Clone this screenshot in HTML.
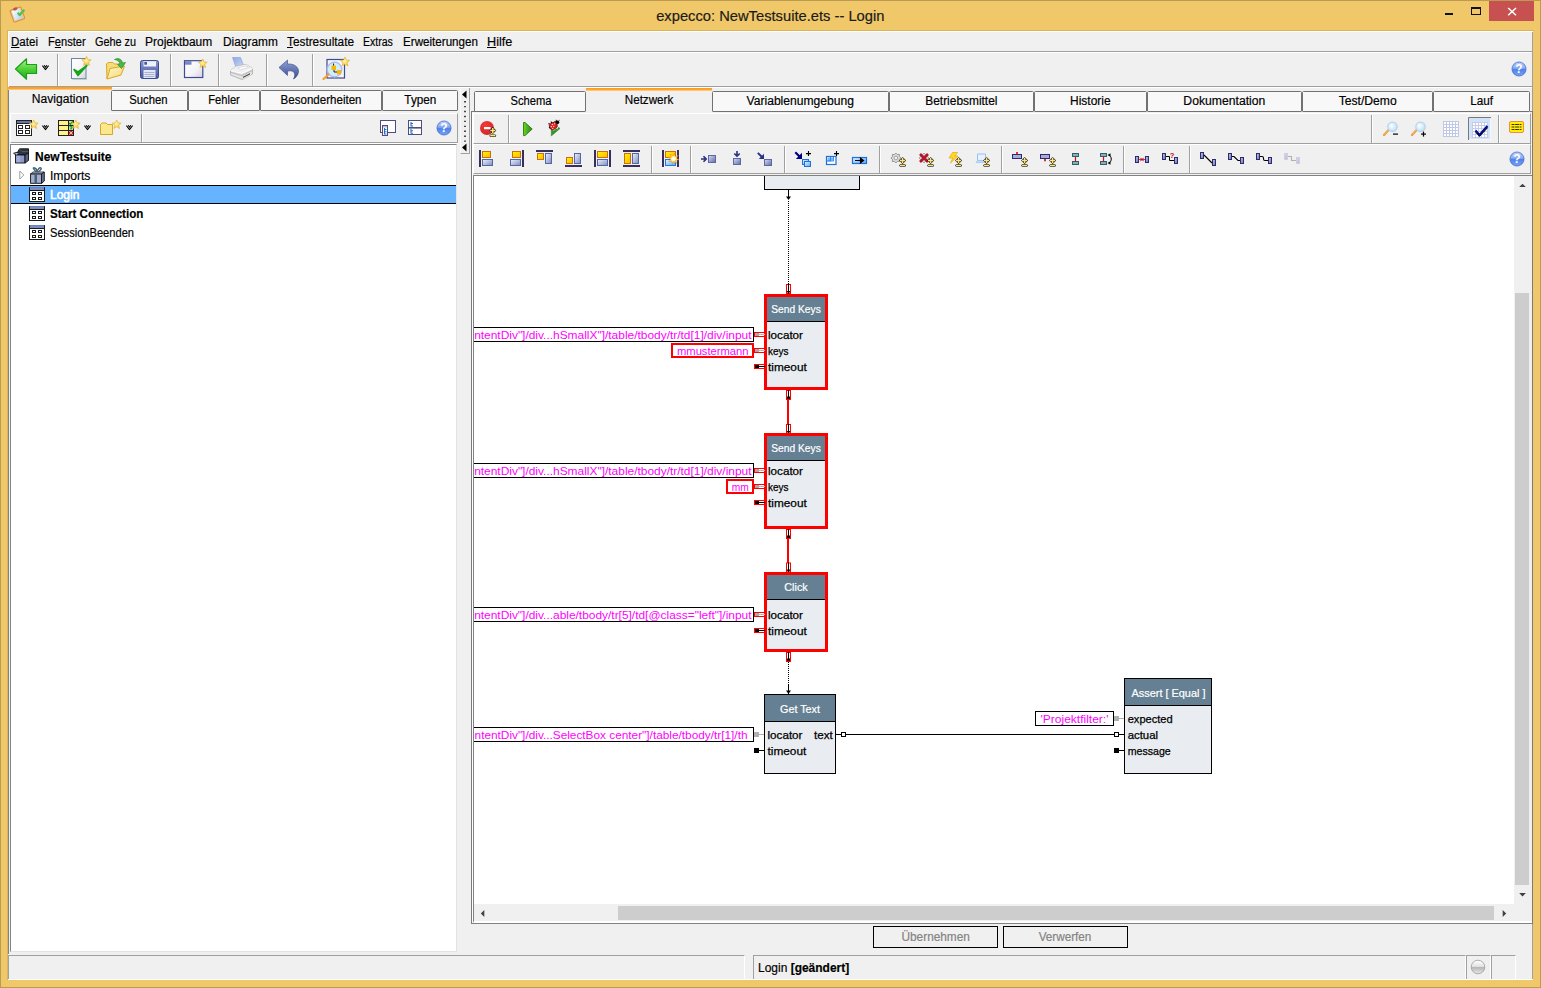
<!DOCTYPE html>
<html><head><meta charset="utf-8"><title>expecco</title>
<style>
*{box-sizing:border-box;margin:0;padding:0}
html,body{width:1541px;height:988px;overflow:hidden;background:#f0c869;font-family:"Liberation Sans",sans-serif;font-size:12px;color:#000;-webkit-text-stroke:.18px currentColor}
.a{position:absolute}
.t{position:absolute;white-space:nowrap;line-height:14px;height:14px}
u{text-decoration:underline}
#win{left:0;top:0;width:1541px;height:988px;background:#f0c869;border:1px solid #b99c52}
#client{left:8px;top:31px;width:1525px;height:949px;background:#f0f0f0}
.tab{position:absolute;height:21px;background:#f8f8f8;border:1px solid #717171;border-radius:1.500px 1.500px 1px 1px;text-align:center;line-height:19px;white-space:nowrap}
.tab.act{background:#f0f0f0;border:0;border-top:2px solid #ffa533;height:25px;line-height:21px}
.vsep{position:absolute;width:2px;border-left:1px solid #a0a0a0;border-right:1px solid #fff}
.hsep{position:absolute;height:2px;border-top:1px solid #a0a0a0;border-bottom:1px solid #fff}
.mag{color:#ff00ff}
.box{position:absolute;background:#fff;border:1px solid #000;color:#f0f;white-space:nowrap;line-height:13px;text-align:right;overflow:hidden}
.node{position:absolute;background:#e9edf1;border:1px solid #000}
.node.red{border:3px solid #f00}
.hd{position:absolute;left:0;right:0;top:0;background:#637b8f;color:#fff;text-align:center;border-bottom:1px solid #000;white-space:nowrap}
</style></head><body>
<div class="a" id="win"></div>
<div class="a" id="client"></div>
<!--TITLE-->
<div class="t" style="left:0;width:1541px;top:7px;text-align:center;font-size:15px;line-height:18px;height:18px;color:#1a1a1a"><span style="display:inline-block;transform:scaleX(0.9814);transform-origin:50% 50%">expecco: NewTestsuite.ets -- Login</span></div>
<!-- window controls -->
<div class="a" style="left:1489px;top:1px;width:45px;height:20px;background:#c75050"></div>
<svg class="a" style="left:1440px;top:0" width="100" height="24" viewBox="0 0 100 24">
<rect x="5" y="13" width="8" height="2" fill="#111"/>
<rect x="31.5" y="8.500" width="9" height="6" fill="none" stroke="#111" stroke-width="1"/><rect x="31" y="7" width="10" height="2" fill="#111"/>
<path d="M68.200 8 L76 15.200 M76 8 L68.200 15.200" stroke="#fff" stroke-width="1.500" fill="none"/>
</svg>
<!-- app icon -->
<svg class="a" style="left:8px;top:4px" width="20" height="19" viewBox="0 0 20 19"><defs><linearGradient id="gClipP" x1="0" y1="0" x2="1" y2="1"><stop offset="0" stop-color="#ffffff"/><stop offset="1" stop-color="#a8d0f0"/></linearGradient></defs>
<g transform="rotate(-20 10 10)"><rect x="3.500" y="4" width="11.500" height="12.500" rx="1" fill="#f0c890" stroke="#d88838" stroke-width="1" opacity=".9"/><rect x="5" y="5.200" width="8.500" height="10" fill="url(#gClipP)"/><ellipse cx="9.200" cy="4.200" rx="2.300" ry="1.500" fill="#c4524a"/></g>
<path d="M9.800 8.700 L11.700 11 L16.300 5.800" stroke="#58c048" stroke-width="2.300" fill="none" stroke-linejoin="round"/>
</svg>
<!-- menu bar -->
<div class="a" style="left:8px;top:31px;width:1525px;height:1px;background:#fff"></div>
<div class="t" style="left:11px;top:35px"><span style="display:inline-block;transform:scaleX(0.9632);transform-origin:0 50%"><u>D</u>atei</span></div>
<div class="t" style="left:47.5px;top:35px"><span style="display:inline-block;transform:scaleX(0.9259);transform-origin:0 50%">F<u>e</u>nster</span></div>
<div class="t" style="left:94.5px;top:35px"><span style="display:inline-block;transform:scaleX(0.9058);transform-origin:0 50%">Gehe zu</span></div>
<div class="t" style="left:145.3px;top:35px"><span style="display:inline-block;transform:scaleX(0.9974);transform-origin:0 50%">Projektbaum</span></div>
<div class="t" style="left:222.5px;top:35px"><span style="display:inline-block;transform:scaleX(0.9902);transform-origin:0 50%">Diagramm</span></div>
<div class="t" style="left:287px;top:35px"><span style="display:inline-block;transform:scaleX(0.9846);transform-origin:0 50%"><u>T</u>estresultate</span></div>
<div class="t" style="left:363.4px;top:35px"><span style="display:inline-block;transform:scaleX(0.8790);transform-origin:0 50%">Extras</span></div>
<div class="t" style="left:402.5px;top:35px"><span style="display:inline-block;transform:scaleX(0.9691);transform-origin:0 50%">Erweiterungen</span></div>
<div class="t" style="left:487.3px;top:35px"><span style="display:inline-block;transform:scaleX(1.0535);transform-origin:0 50%"><u>H</u>ilfe</span></div>
<div class="a" style="left:9px;top:51px;width:1523px;height:1px;background:#a0a0a0"></div>
<div class="a" style="left:9px;top:52px;width:1523px;height:1px;background:#fff"></div>
<div class="a" style="left:8px;top:31px;width:1px;height:58px;background:#fff"></div><div class="a" style="left:8px;top:89px;width:1px;height:865px;background:#828282"></div><div class="a" style="left:7px;top:30px;width:1527px;height:1px;background:#d9b45c"></div><div class="a" style="left:7px;top:30px;width:1px;height:950px;background:#d9b45c"></div>
<div class="a" style="left:1532px;top:32px;width:1px;height:948px;background:#a0a0a0"></div>

<svg width="0" height="0" style="position:absolute"><defs>
<linearGradient id="gGreen" x1="0" y1="0" x2="0" y2="1"><stop offset="0" stop-color="#b4f08c"/><stop offset=".5" stop-color="#4fd23a"/><stop offset="1" stop-color="#1ea81c"/></linearGradient>
<linearGradient id="gPaper" x1="0" y1="0" x2="1" y2="1"><stop offset="0" stop-color="#ffffff"/><stop offset=".6" stop-color="#f4f2f6"/><stop offset="1" stop-color="#d4d0e0"/></linearGradient>
<linearGradient id="gFold" x1="0" y1="0" x2="1" y2="1"><stop offset="0" stop-color="#fffbd4"/><stop offset="1" stop-color="#f7d468"/></linearGradient>
<linearGradient id="gDisk" x1="0" y1="0" x2="0" y2="1"><stop offset="0" stop-color="#8898d0"/><stop offset="1" stop-color="#46579c"/></linearGradient>
<linearGradient id="gUndo" x1="0" y1="0" x2="0" y2="1"><stop offset="0" stop-color="#8fa2d6"/><stop offset="1" stop-color="#3a4c90"/></linearGradient>
<linearGradient id="gHelp" x1="0" y1="0" x2="0" y2="1"><stop offset="0" stop-color="#c4d4fa"/><stop offset=".45" stop-color="#86a8f2"/><stop offset=".52" stop-color="#4e82ea"/><stop offset="1" stop-color="#78a2f4"/></linearGradient>
<radialGradient id="gStar" cx=".45" cy=".45" r=".6"><stop offset="0" stop-color="#fff6a8"/><stop offset="1" stop-color="#f2c030"/></radialGradient>
<symbol id="star" viewBox="0 0 10 10"><path d="M5 .3 L6.4 3.5 L9.8 3.8 L7.2 6.1 L8 9.6 L5 7.7 L2 9.6 L2.8 6.1 L.2 3.8 L3.6 3.5 Z" fill="url(#gStar)" stroke="#e0a820" stroke-width=".5"/></symbol>
<symbol id="chev" viewBox="0 0 7 5.500"><path d="M.4 .7 L3.500 4.600 L6.600 .7 M2.100 .3 L3.500 2.100 L4.900 .3" stroke="#000" stroke-width="1.050" fill="none" stroke-linejoin="miter"/></symbol>
<symbol id="help" viewBox="0 0 16 16"><circle cx="8" cy="8" r="7.800" fill="#d8e6ff" opacity=".7"/><circle cx="8" cy="8" r="7" fill="url(#gHelp)" stroke="#4a6cc8" stroke-width=".8"/><text x="8" y="12.300" font-family="Liberation Sans, sans-serif" font-weight="bold" font-size="12" text-anchor="middle" fill="#fff">?</text></symbol>
</defs></svg>
<!-- back arrow -->
<svg class="a" style="left:14px;top:57px" width="24" height="24" viewBox="0 0 24 24"><path d="M1.5 12 L12.5 1.8 L12.5 7.5 L22.5 7.5 L22.5 16.5 L12.5 16.5 L12.5 22.2 Z" fill="url(#gGreen)" stroke="#18a018" stroke-width="1.2" stroke-linejoin="round"/></svg>
<svg class="a" style="left:42px;top:65px" width="7" height="5.5"><use href="#chev"/></svg>
<div class="vsep" style="left:57px;top:54px;height:32px"></div>
<!-- check doc -->
<svg class="a" style="left:70px;top:56px" width="24" height="25" viewBox="0 0 24 25"><rect x="1.5" y="2.5" width="14.5" height="20" fill="url(#gPaper)" stroke="#6c86a0" stroke-width="1"/><rect x="2.5" y="22.5" width="14.5" height="1" fill="#9aa"/><path d="M4 13.5 L8 19.5 L17 9.5 L8 16 Z" fill="#18b418" stroke="#18a418" stroke-width="1.6" stroke-linejoin="round"/><use href="#star" x="11.5" y="0" width="10" height="10"/></svg>
<!-- open folder -->
<svg class="a" style="left:105px;top:56px" width="24" height="25" viewBox="0 0 24 25"><path d="M2 23 L1.5 8 L3 6.5 L8 6.5 L9.5 8 L15 8 L15 11" fill="#f6dc7c" stroke="#d8a820" stroke-width="1"/><path d="M2 23 L5 12.5 L19.5 10 L16 19 Z" fill="url(#gFold)" stroke="#d8a820" stroke-width="1" stroke-linejoin="round"/><path d="M9.5 3.5 C13 1.5 17 3 17.5 7 L20.5 6.5 L16.5 12.5 L12.5 8.5 L15 8 C14.5 5.5 12.5 4 9.5 3.5 Z" fill="#4cb648" stroke="#2c902c" stroke-width=".7"/></svg>
<!-- save -->
<svg class="a" style="left:139px;top:59px" width="22" height="21" viewBox="0 0 22 21"><rect x="1.500" y="1.500" width="18" height="18" rx="2" fill="url(#gDisk)" stroke="#3c4c8c" stroke-width="1"/><rect x="4.500" y="2.200" width="12.500" height="5.300" fill="#eef0fa"/><rect x="5.300" y="3" width="2.700" height="2.700" fill="#4a5a9c"/><rect x="4.500" y="11" width="12" height="8" fill="#e4e8f6"/><path d="M5.500 13.500 H15.500 M5.500 15.500 H15.500 M5.500 17.500 H15.500" stroke="#a6b0d6" stroke-width="1"/></svg>
<div class="vsep" style="left:170px;top:54px;height:32px"></div>
<!-- new window -->
<svg class="a" style="left:183px;top:57px" width="26" height="23" viewBox="0 0 26 23"><rect x="1.500" y="3.700" width="18.300" height="16.800" fill="url(#gPaper)" stroke="#3c4c94" stroke-width="1.200"/><rect x="2" y="4.200" width="6.500" height="3.500" fill="#7888c0"/><use href="#star" x="15" y="1.500" width="9.500" height="9.500"/></svg>
<div class="vsep" style="left:218px;top:54px;height:32px"></div>
<!-- printer -->
<svg class="a" style="left:229px;top:56px" width="26" height="26" viewBox="0 0 26 26"><defs><linearGradient id="gPrP" x1="0" y1="0" x2="1" y2="1"><stop offset="0" stop-color="#8ea8e4"/><stop offset="1" stop-color="#c8d8f6"/></linearGradient></defs><path d="M3.500 1.500 L11.500 1.500 L14.500 9.500 L7 11.500 Z" fill="url(#gPrP)" stroke="#8ca4dc" stroke-width=".7"/><path d="M1.500 14.500 L7 10.500 L17 8.500 L23.500 12.500 L23.500 18 L13 23.500 L1.500 19 Z" fill="#e4e4e4" stroke="#aaaaaa" stroke-width=".8"/><path d="M1.500 14.500 L7 10.500 L17 8.500 L23.500 12.500 L12.500 17.500 Z" fill="#f1f1f1"/><path d="M8.500 11.800 L16.500 10 L19.500 11.500 L11.500 13.800 Z" fill="#fdfdfd" stroke="#c4c4c4" stroke-width=".5"/><path d="M1.500 14.500 L12.500 17.500 L23.500 12.500" fill="none" stroke="#ffffff" stroke-width=".9"/><path d="M1.800 16.200 L12.500 19.500 L23.300 14.600" fill="none" stroke="#b8b8b8" stroke-width="1.100"/><path d="M13 21.200 L21.500 17.200 L22.500 18.700 L14 23 Z" fill="#fafafa" stroke="#bbb" stroke-width=".4"/><path d="M14 20.700 L21 17.300 L21 18.600 L14 22 Z" fill="#4a4a4a"/></svg>
<div class="vsep" style="left:266px;top:54px;height:32px"></div>
<!-- undo -->
<svg class="a" style="left:278px;top:59px" width="22" height="21" viewBox="0 0 22 21"><path d="M1 8.500 L9.500 1 L9.500 5 C16 4.500 21 8 20.500 13 C20 16.500 17.500 19 15.500 20 C17 17.500 17.500 14 15 12.500 C13.500 11.600 11.500 11.800 9.500 12.200 L9.500 16.500 Z" fill="url(#gUndo)" stroke="#34468a" stroke-width=".6"/></svg>
<div class="vsep" style="left:312px;top:54px;height:32px"></div>
<!-- zoom diagram -->
<svg class="a" style="left:322px;top:57px" width="28" height="24" viewBox="0 0 28 24"><rect x="5" y="2.500" width="17.500" height="18.500" fill="#f4f4fa" stroke="#3c4c94" stroke-width="1.200"/><circle cx="12.500" cy="12.500" r="7.300" fill="#c8ecf8" fill-opacity=".85" stroke="#b0b8e8" stroke-width="1.300"/><rect x="9.500" y="8.500" width="4.500" height="4.500" fill="#f8b800"/><rect x="15" y="13" width="4" height="4.500" fill="#f8b800"/><path d="M11.500 6.500 V8.500 M12 13 V15 H15" stroke="#222" stroke-width="1" fill="none"/><path d="M1.500 22 L6.500 17.500" stroke="#f0a030" stroke-width="2.200" stroke-linecap="round"/><use href="#star" x="18" y="-.5" width="10" height="10"/></svg>
<!-- help right -->
<svg class="a" style="left:1511px;top:61px" width="16" height="16"><use href="#help" width="16" height="16"/></svg>
<div class="a" style="left:9px;top:86px;width:1523px;height:1px;background:#a0a0a0"></div>
<div class="a" style="left:9px;top:87px;width:1523px;height:1px;background:#fff"></div>

<svg width="0" height="0" style="position:absolute"><defs>
<symbol id="tbl" viewBox="0 0 16 16"><rect x=".5" y=".5" width="15" height="15" fill="#fff" stroke="#222" stroke-width="1"/><rect x="1" y="1" width="14" height="2" fill="#6674a8"/><rect x="1" y="3" width="14" height="1" fill="#222"/><rect x="2.500" y="5.500" width="4" height="3" fill="#fff" stroke="#222"/><rect x="9.500" y="5.500" width="4" height="3" fill="#fff" stroke="#222"/><rect x="2.500" y="10.500" width="4" height="3" fill="#fff" stroke="#222"/><rect x="9.500" y="10.500" width="4" height="3" fill="#fff" stroke="#222"/></symbol><symbol id="tbl15" viewBox="0 0 16 15"><rect x=".5" y=".5" width="15" height="14" fill="#fff" stroke="#1a1a1a" stroke-width="1"/><rect x="1" y="0" width="14" height="3" fill="#7b8cc4"/><rect x="0" y="0" width="16" height=".5" fill="#5a6898" opacity=".6"/><rect x="0" y="3" width="16" height="1" fill="#1a1a1a"/><rect x="3.500" y="5.500" width="3" height="2" fill="#fff" stroke="#1a1a1a" stroke-width="1"/><rect x="9.500" y="5.500" width="3" height="2" fill="#fff" stroke="#1a1a1a" stroke-width="1"/><rect x="3.500" y="10.500" width="3" height="2" fill="#fff" stroke="#1a1a1a" stroke-width="1"/><rect x="9.500" y="10.500" width="3" height="2" fill="#fff" stroke="#1a1a1a" stroke-width="1"/></symbol>
</defs></svg>
<!-- left tabs -->
<div class="a" style="left:8px;top:87px;width:104px;height:3px;background:linear-gradient(#ff9818,#ffa228 34%,#ffa830 66%,#ffc870 67%)"></div>
<div class="t" style="left:8px;top:92px;width:104px;text-align:center"><span style="display:inline-block;transform:scaleX(1.0052);transform-origin:50% 50%">Navigation</span></div>
<div class="tab" style="left:111px;top:90px;width:77px;padding-right:2px"><span style="display:inline-block;transform:scaleX(0.9410);transform-origin:50% 50%">Suchen</span></div>
<div class="tab" style="left:188px;top:90px;width:72px"><span style="display:inline-block;transform:scaleX(0.9290);transform-origin:50% 50%">Fehler</span></div>
<div class="tab" style="left:260px;top:90px;width:122px"><span style="display:inline-block;transform:scaleX(0.9634);transform-origin:50% 50%">Besonderheiten</span></div>
<div class="tab" style="left:382px;top:90px;width:76px"><span style="display:inline-block;transform:scaleX(0.9785);transform-origin:50% 50%">Typen</span></div>
<!-- sub toolbar -->
<div class="a" style="left:10px;top:113px;width:448px;height:30px;border-top:1px solid #fff;border-left:1px solid #fff;border-right:1px solid #a0a0a0;border-bottom:1px solid #a0a0a0"></div>
<svg class="a" style="left:16px;top:118px" width="24" height="18" viewBox="0 0 24 18"><use href="#tbl" x="0" y="2" width="16" height="16"/><use href="#star" x="13" y="1.500" width="9.500" height="9.500"/></svg>
<svg class="a" style="left:42px;top:125px" width="7" height="5.5"><use href="#chev"/></svg>
<svg class="a" style="left:58px;top:118px" width="24" height="18" viewBox="0 0 24 18"><rect x=".5" y="2.500" width="15" height="15" fill="#fff48c" stroke="#222"/><path d="M.5 7.500 H15.500 M.5 12.500 H15.500 M10.500 2.500 V17.500" stroke="#222" stroke-width="1" fill="none"/><rect x="11" y="3" width="4" height="4" fill="#b8e8a0"/><rect x="11" y="8" width="4" height="4" fill="#b8e8a0"/><rect x="11" y="13" width="4" height="4" fill="#ffd0c0"/><path d="M11.300 5 L12.500 6.300 L14.700 3.300" stroke="#0a9020" stroke-width="1.200" fill="none"/><path d="M11.800 9 Q13 8 14 9 Q14.300 10 13 10.500 V11.500" stroke="#0a9020" stroke-width="1.100" fill="none"/><circle cx="13" cy="15" r="1.500" fill="#fff" stroke="#e00" stroke-width="1.100"/><use href="#star" x="13" y="1.500" width="9.500" height="9.500"/></svg>
<svg class="a" style="left:84px;top:125px" width="7" height="5.5"><use href="#chev"/></svg>
<svg class="a" style="left:100px;top:118px" width="24" height="18" viewBox="0 0 24 18"><path d="M.5 16.500 V6.500 L2 5 H6 L7.500 6.500 H12.500 V16.500 Z" fill="#fce88c" stroke="#d8a820" stroke-width="1"/><use href="#star" x="12" y="1.500" width="9.500" height="9.500"/></svg>
<svg class="a" style="left:126px;top:125px" width="7" height="5.5"><use href="#chev"/></svg>
<div class="vsep" style="left:141px;top:114px;height:28px"></div>
<svg class="a" style="left:380px;top:120px" width="17" height="17" viewBox="0 0 17 17"><rect x=".5" y=".5" width="15" height="12" fill="#fff" stroke="#504c80" stroke-width="1"/><rect x="2.500" y="5.500" width="5" height="10" fill="#fff" stroke="#504c80" stroke-width="1"/><rect x="3" y="6" width="4" height="1.500" fill="#b8bcd8"/><path d="M4.500 8 V14.500 M4.500 9.500 H6.500 M4.500 11.800 H6.500 M4.500 14 H6.500" stroke="#2070c8" stroke-width="1.100" fill="none"/></svg>
<svg class="a" style="left:408px;top:120px" width="15" height="16" viewBox="0 0 15 16"><rect x=".5" y=".5" width="13" height="14" fill="#fff" stroke="#504c80" stroke-width="1"/><path d="M.5 7.800 H13.500" stroke="#504c80" stroke-width="1.600"/><path d="M3 2 V6.500 M3 3.500 H5 M3 6 H5 M3 9 V13.500 M3 10.800 H5 M3 13.200 H5" stroke="#2070c8" stroke-width="1.100" fill="none"/></svg>
<svg class="a" style="left:436px;top:120px" width="16" height="16"><use href="#help" width="16" height="16"/></svg>
<!-- tree panel -->
<div class="a" style="left:10px;top:144px;width:447px;height:808px;background:#fff;border-top:1px solid #828282;border-left:1px solid #828282;border-right:1px solid #e3e3e3;border-bottom:1px solid #e3e3e3"></div>
<div class="a" style="left:10px;top:143px;width:448px;height:1px;background:#fff"></div>
<div class="a" style="left:11px;top:185px;width:445px;height:19px;background:#66b3ff;border-top:1px solid #000;border-bottom:1px solid #000"></div>
<!-- tree icons -->
<svg class="a" style="left:13px;top:148px" width="17" height="16" viewBox="0 0 17 16"><path d="M6.500 .8 H15.500 V5 L12 7 H3 Z" fill="#2c393e" stroke="#111" stroke-width=".9"/><path d="M6.500 1 L9 3.500 H15" fill="none" stroke="#55666c" stroke-width=".8"/><rect x="2.500" y="7" width="9.500" height="8" fill="#8e9acb" stroke="#111" stroke-width=".9"/><rect x="3.300" y="7.800" width="4" height="6.400" fill="#aab4de" opacity=".7"/><path d="M12 7 L15.500 5 V12.500 L12 15 Z" fill="#56628f" stroke="#111" stroke-width=".9"/><path d="M3 7 L.6 5.300 L4 4.300 L6 5.300" fill="#a4afdc" stroke="#111" stroke-width=".9" stroke-linejoin="round"/></svg>
<svg class="a" style="left:19px;top:170px" width="6" height="10" viewBox="0 0 6 10"><path d="M.8 1 L4.800 5 L.8 9 Z" fill="#fff" stroke="#a0a0a0" stroke-width="1"/></svg>
<svg class="a" style="left:30px;top:167px" width="15" height="17" viewBox="0 0 15 17"><path d="M.5 7 L3 5 H14 L11.500 7 Z" fill="#d0d4e4" stroke="#111" stroke-width=".8"/><rect x=".6" y="7" width="11" height="9.300" fill="#a4acd0" stroke="#111" stroke-width=".9"/><path d="M11.600 7 L14.300 5 V14 L11.600 16.300 Z" fill="#6c7498" stroke="#111" stroke-width=".9"/><rect x="4.500" y="7" width="2.500" height="9.300" fill="#3e6478"/><path d="M6 5 C3 1 2.500 .5 4.500 .8 C6 1.200 7 3.500 7 5 C7.500 2.500 9.500 0 11 1 C12 2 9.500 4 8 5" fill="none" stroke="#3e6478" stroke-width="1.300"/></svg>
<svg class="a" style="left:29px;top:187px" width="16" height="15"><use href="#tbl15" width="16" height="15"/></svg>
<svg class="a" style="left:29px;top:206px" width="16" height="15"><use href="#tbl15" width="16" height="15"/></svg>
<svg class="a" style="left:29px;top:225px" width="16" height="15"><use href="#tbl15" width="16" height="15"/></svg>
<!-- tree text -->
<div class="t" style="left:34.5px;top:150px;font-weight:bold"><span style="display:inline-block;transform:scaleX(0.9991);transform-origin:0 50%">NewTestsuite</span></div>
<div class="t" style="left:50px;top:169px"><span style="display:inline-block;transform:scaleX(1.0096);transform-origin:0 50%">Imports</span></div>
<div class="t" style="left:50px;top:188px;color:#fff;-webkit-text-stroke:.55px #fff"><span style="display:inline-block;transform:scaleX(1.0009);transform-origin:0 50%">Login</span></div>
<div class="t" style="left:50px;top:207px;font-weight:bold"><span style="display:inline-block;transform:scaleX(0.9651);transform-origin:0 50%">Start Connection</span></div>
<div class="t" style="left:50px;top:226px"><span style="display:inline-block;transform:scaleX(0.9256);transform-origin:0 50%">SessionBeenden</span></div>
<!-- splitter -->
<div class="a" style="left:460px;top:88px;width:10px;height:66px;border-right:1px solid #a0a0a0;border-bottom:1px solid #a0a0a0;border-left:1px solid #fafafa"></div>
<svg class="a" style="left:460px;top:88px" width="10" height="66" viewBox="0 0 10 66"><path d="M6.500 2.500 V10.500 L2 6.500 Z M6.500 55.500 V63.500 L2 59.500 Z" fill="#000"/><path d="M5 13 V55" stroke="#000" stroke-width="1.400" stroke-dasharray="1.400 3.530"/></svg>

<!-- right tabs -->
<div class="tab" style="left:474px;top:91px;width:112px;padding-left:2px"><span style="display:inline-block;transform:scaleX(0.9312);transform-origin:50% 50%">Schema</span></div>
<div class="a" style="left:586px;top:88px;width:126px;height:3px;background:linear-gradient(#ff9818,#ffa228 34%,#ffa830 66%,#ffc870 67%)"></div>
<div class="t" style="left:586px;top:93px;width:126px;text-align:center"><span style="display:inline-block;transform:scaleX(0.9697);transform-origin:50% 50%">Netzwerk</span></div>
<div class="tab" style="left:712px;top:91px;width:177px"><span style="display:inline-block;transform:scaleX(1.0091);transform-origin:50% 50%">Variablenumgebung</span></div>
<div class="tab" style="left:889px;top:91px;width:145px"><span style="display:inline-block;transform:scaleX(0.9931);transform-origin:50% 50%">Betriebsmittel</span></div>
<div class="tab" style="left:1034px;top:91px;width:113px"><span style="display:inline-block;transform:scaleX(0.9954);transform-origin:50% 50%">Historie</span></div>
<div class="tab" style="left:1147px;top:91px;width:155px"><span style="display:inline-block;transform:scaleX(1.0159);transform-origin:50% 50%">Dokumentation</span></div>
<div class="tab" style="left:1302px;top:91px;width:131px"><span style="display:inline-block;transform:scaleX(1.0112);transform-origin:50% 50%">Test/Demo</span></div>
<div class="tab" style="left:1433px;top:91px;width:97px"><span style="display:inline-block;transform:scaleX(0.9761);transform-origin:50% 50%">Lauf</span></div>
<!-- panel frame -->
<div class="a" style="left:471px;top:111px;width:1px;height:813px;background:#7a7a7a"></div><div class="a" style="left:471px;top:111px;width:4px;height:1px;background:#7a7a7a"></div><div class="a" style="left:472px;top:112px;width:1px;height:810px;background:#fff"></div>
<div class="a" style="left:473px;top:113px;width:1058px;height:31px;border-top:1px solid #fff;border-left:1px solid #fff;border-right:1px solid #a0a0a0;border-bottom:1px solid #a0a0a0"></div>
<div class="a" style="left:473px;top:144px;width:1058px;height:30px;border-top:1px solid #fff;border-left:1px solid #fff;border-right:1px solid #a0a0a0;border-bottom:1px solid #a0a0a0"></div>
<!--TBSTART-->
<svg class="a" style="left:474px;top:113px" width="1058" height="62" viewBox="474 113 1058 62"><defs>
<linearGradient id="gY" x1="0" y1="0" x2="1" y2="1"><stop offset="0" stop-color="#fff800"/><stop offset="1" stop-color="#ffb400"/></linearGradient>
<linearGradient id="gB" x1="0" y1="0" x2="1" y2="1"><stop offset="0" stop-color="#f0f2fa"/><stop offset="1" stop-color="#7c8cc0"/></linearGradient>
<linearGradient id="gB2" x1="0" y1="0" x2="1" y2="1"><stop offset="0" stop-color="#d8dcf0"/><stop offset="1" stop-color="#5c6ca8"/></linearGradient>
<linearGradient id="gLB" x1="0" y1="0" x2="1" y2="1"><stop offset="0" stop-color="#e8f4ff"/><stop offset="1" stop-color="#58a8f0"/></linearGradient>
<linearGradient id="gPl" x1="0" y1="0" x2="1" y2="0"><stop offset="0" stop-color="#66dc1c"/><stop offset=".45" stop-color="#48b020"/><stop offset="1" stop-color="#2e8a18"/></linearGradient>
<linearGradient id="gPin" x1="0" y1="0" x2="1" y2="1"><stop offset="0" stop-color="#c4c8ec"/><stop offset="1" stop-color="#6870ac"/></linearGradient>
<radialGradient id="gSp" cx=".5" cy=".5" r=".5"><stop offset="0" stop-color="#fff"/><stop offset=".45" stop-color="#fff6a0"/><stop offset=".8" stop-color="#ffc020"/><stop offset="1" stop-color="#f08000"/></radialGradient>
<radialGradient id="gRed" cx=".4" cy=".3" r=".8"><stop offset="0" stop-color="#f83838"/><stop offset="1" stop-color="#c82828"/></radialGradient>
<radialGradient id="gLens" cx=".4" cy=".4" r=".6"><stop offset="0" stop-color="#ffffff"/><stop offset="1" stop-color="#bce0f8"/></radialGradient>
<symbol id="stamp" viewBox="0 0 7 10.200" overflow="visible"><path d="M3.500 .1 L7 3.600 L3.500 7.100 L0 3.600 Z" fill="#18181c"/><path d="M.9 3.600 H6.100 M3.500 1 V6.200" stroke="#ffe672" stroke-width="1.500"/><path d="M0 8.700 L1 7.500 H6 L7 8.700 L6 9.900 H1 Z" fill="#18181c"/><path d="M.9 8.700 H6.100" stroke="#ffe672" stroke-width="1.350"/></symbol>
</defs>
<circle cx="487" cy="128" r="7" fill="url(#gRed)"/><rect x="484" y="127" width="6.500" height="2.200" fill="#fff"/>
<use href="#stamp" x="489.3" y="127" width="7" height="10.200"/>
<rect x="508" y="115" width="1" height="28" fill="#a0a0a0"/><rect x="509" y="115" width="1" height="28" fill="#fff"/>
<path d="M523.500 122.500 H525 L532.200 129 L525 135.600 H523.500 Z" fill="url(#gPl)" stroke="#2a7c12" stroke-width=".9" stroke-linejoin="round"/>
<path d="M551.300 129.500 L554 131 L556.200 128.800 L557.300 129.800 L558.500 127.300 L560 128.500 L551.300 135.900 Z" fill="#35962a" stroke="#247a1c" stroke-width=".5"/>
<path d="M548.300 123.700 L550.300 124 M549 128 L550.500 127 M550.800 121.600 L552 122.800 M555 120.800 L555.200 122" stroke="#000" stroke-width="1.100"/>
<circle cx="557.300" cy="122.300" r="1.900" fill="#000"/><path d="M558.500 121 L559.500 120.300 M556.500 120.800 L556.200 119.800" stroke="#000" stroke-width=".9"/>
<ellipse cx="553.300" cy="125.900" rx="4.200" ry="3.500" fill="#e41a1a" stroke="#300" stroke-width=".5" transform="rotate(-32 553.300 125.900)"/>
<circle cx="552.300" cy="124.500" r=".65" fill="#fff"/><circle cx="554.600" cy="123.800" r=".65" fill="#fff"/><circle cx="551.300" cy="126.700" r=".65" fill="#fff"/><circle cx="553.700" cy="126.300" r=".65" fill="#fff"/><circle cx="552.800" cy="128.300" r=".65" fill="#fff"/>
<rect x="1371" y="115" width="1" height="28" fill="#a0a0a0"/><rect x="1372" y="115" width="1" height="28" fill="#fff"/>
<path d="M1384 135.0 L1389 129.5" stroke="#e89838" stroke-width="2.200" stroke-linecap="round"/><path d="M1384.3 134.5 L1388.5 129.7" stroke="#f8c888" stroke-width=".8"/>
<circle cx="1392.5" cy="126.8" r="4.700" fill="url(#gLens)" stroke="#b8d4ec" stroke-width="1.300"/>
<rect x="1393" y="133.5" width="5" height="1.200" fill="#000"/>
<path d="M1412 135.0 L1417 129.5" stroke="#e89838" stroke-width="2.200" stroke-linecap="round"/><path d="M1412.3 134.5 L1416.5 129.7" stroke="#f8c888" stroke-width=".8"/>
<circle cx="1420.5" cy="126.8" r="4.700" fill="url(#gLens)" stroke="#b8d4ec" stroke-width="1.300"/>
<rect x="1421" y="133.5" width="5" height="1.200" fill="#000"/>
<rect x="1422.9" y="131.6" width="1.200" height="5" fill="#000"/>
<rect x="1443" y="121" width="16" height="16" fill="#c0c8e8"/>
<rect x="1444" y="122" width="2" height="2" fill="#fff"/>
<rect x="1444" y="125" width="2" height="2" fill="#fff"/>
<rect x="1444" y="128" width="2" height="2" fill="#fff"/>
<rect x="1444" y="131" width="2" height="2" fill="#fff"/>
<rect x="1444" y="134" width="2" height="2" fill="#fff"/>
<rect x="1447" y="122" width="2" height="2" fill="#fff"/>
<rect x="1447" y="125" width="2" height="2" fill="#fff"/>
<rect x="1447" y="128" width="2" height="2" fill="#fff"/>
<rect x="1447" y="131" width="2" height="2" fill="#fff"/>
<rect x="1447" y="134" width="2" height="2" fill="#fff"/>
<rect x="1450" y="122" width="2" height="2" fill="#fff"/>
<rect x="1450" y="125" width="2" height="2" fill="#fff"/>
<rect x="1450" y="128" width="2" height="2" fill="#fff"/>
<rect x="1450" y="131" width="2" height="2" fill="#fff"/>
<rect x="1450" y="134" width="2" height="2" fill="#fff"/>
<rect x="1453" y="122" width="2" height="2" fill="#fff"/>
<rect x="1453" y="125" width="2" height="2" fill="#fff"/>
<rect x="1453" y="128" width="2" height="2" fill="#fff"/>
<rect x="1453" y="131" width="2" height="2" fill="#fff"/>
<rect x="1453" y="134" width="2" height="2" fill="#fff"/>
<rect x="1456" y="122" width="2" height="2" fill="#fff"/>
<rect x="1456" y="125" width="2" height="2" fill="#fff"/>
<rect x="1456" y="128" width="2" height="2" fill="#fff"/>
<rect x="1456" y="131" width="2" height="2" fill="#fff"/>
<rect x="1456" y="134" width="2" height="2" fill="#fff"/>
<rect x="1468.500" y="117.500" width="22" height="22" fill="#d2e2f8" stroke="none"/><path d="M1468.500 140 V117.500 H1491" stroke="#787878" stroke-width="1" fill="none"/><path d="M1469.500 139.500 H1490.500 V118.500" stroke="#fff" stroke-width="1" fill="none" opacity=".6"/>
<rect x="1472" y="122" width="16" height="16" fill="#c4cce8"/>
<rect x="1473" y="123" width="2" height="2" fill="#fff"/>
<rect x="1473" y="126" width="2" height="2" fill="#fff"/>
<rect x="1473" y="129" width="2" height="2" fill="#fff"/>
<rect x="1473" y="132" width="2" height="2" fill="#fff"/>
<rect x="1473" y="135" width="2" height="2" fill="#fff"/>
<rect x="1476" y="123" width="2" height="2" fill="#fff"/>
<rect x="1476" y="126" width="2" height="2" fill="#fff"/>
<rect x="1476" y="129" width="2" height="2" fill="#fff"/>
<rect x="1476" y="132" width="2" height="2" fill="#fff"/>
<rect x="1476" y="135" width="2" height="2" fill="#fff"/>
<rect x="1479" y="123" width="2" height="2" fill="#fff"/>
<rect x="1479" y="126" width="2" height="2" fill="#fff"/>
<rect x="1479" y="129" width="2" height="2" fill="#fff"/>
<rect x="1479" y="132" width="2" height="2" fill="#fff"/>
<rect x="1479" y="135" width="2" height="2" fill="#fff"/>
<rect x="1482" y="123" width="2" height="2" fill="#fff"/>
<rect x="1482" y="126" width="2" height="2" fill="#fff"/>
<rect x="1482" y="129" width="2" height="2" fill="#fff"/>
<rect x="1482" y="132" width="2" height="2" fill="#fff"/>
<rect x="1482" y="135" width="2" height="2" fill="#fff"/>
<rect x="1485" y="123" width="2" height="2" fill="#fff"/>
<rect x="1485" y="126" width="2" height="2" fill="#fff"/>
<rect x="1485" y="129" width="2" height="2" fill="#fff"/>
<rect x="1485" y="132" width="2" height="2" fill="#fff"/>
<rect x="1485" y="135" width="2" height="2" fill="#fff"/>
<path d="M1475.500 130.500 L1479.500 135 L1487.500 126" stroke="#000c90" stroke-width="2.200" fill="none"/><path d="M1476 132.500 L1479.500 136.300 L1487.500 127.800" stroke="#000" stroke-width="1" fill="none"/>
<rect x="1498" y="115" width="1" height="28" fill="#a0a0a0"/><rect x="1499" y="115" width="1" height="28" fill="#fff"/>
<rect x="1509.500" y="121.500" width="14" height="11" rx="1.500" fill="#fff000" stroke="#e89040" stroke-width="1"/><path d="M1511.500 124.500 H1521.500 M1511.500 127 H1521.500 M1511.500 129.500 H1521.500" stroke="#403000" stroke-width="1" stroke-dasharray="3 .6 4 .6 2 .6"/>
<rect x="479" y="150" width="2" height="17" fill="#3a2d5c"/>
<rect x="482.5" y="151.5" width="8" height="6" fill="url(#gY)" stroke="#c87010" stroke-width="1"/>
<rect x="482.5" y="159.5" width="10" height="6" fill="url(#gB)" stroke="#5068a8" stroke-width="1"/>
<rect x="512.5" y="151.5" width="8" height="6" fill="url(#gY)" stroke="#c87010" stroke-width="1"/>
<rect x="510.5" y="159.5" width="10" height="6" fill="url(#gB)" stroke="#5068a8" stroke-width="1"/>
<rect x="522" y="150" width="2" height="17" fill="#3a2d5c"/>
<rect x="536" y="150" width="17" height="2" fill="#3a2d5c"/>
<rect x="537.5" y="153.5" width="6" height="6" fill="url(#gY)" stroke="#c87010" stroke-width="1"/>
<rect x="545.5" y="153.5" width="6" height="10" fill="url(#gB)" stroke="#5068a8" stroke-width="1"/>
<rect x="565" y="165" width="17" height="2" fill="#3a2d5c"/>
<rect x="566.5" y="157.5" width="6" height="6" fill="url(#gY)" stroke="#c87010" stroke-width="1"/>
<rect x="574.5" y="153.5" width="6" height="10" fill="url(#gB)" stroke="#5068a8" stroke-width="1"/>
<rect x="594" y="150" width="2" height="17" fill="#3a2d5c"/>
<rect x="609" y="150" width="2" height="17" fill="#3a2d5c"/>
<rect x="597.5" y="151.5" width="10" height="6" fill="url(#gY)" stroke="#c87010" stroke-width="1"/>
<rect x="597.5" y="159.5" width="10" height="6" fill="url(#gB)" stroke="#5068a8" stroke-width="1"/>
<rect x="623" y="150" width="17" height="2" fill="#3a2d5c"/>
<rect x="623" y="165" width="17" height="2" fill="#3a2d5c"/>
<rect x="624.5" y="153.5" width="6" height="10" fill="url(#gY)" stroke="#c87010" stroke-width="1"/>
<rect x="632.5" y="153.5" width="6" height="10" fill="url(#gB)" stroke="#5068a8" stroke-width="1"/>
<rect x="651" y="146" width="1" height="27" fill="#a0a0a0"/><rect x="652" y="146" width="1" height="27" fill="#fff"/>
<rect x="662" y="150" width="2" height="17" fill="#3a2d5c"/>
<rect x="677" y="150" width="2" height="17" fill="#3a2d5c"/>
<rect x="665.5" y="151.5" width="10" height="6" fill="url(#gY)" stroke="#c87010" stroke-width="1"/>
<rect x="665.5" y="159.5" width="10" height="6" fill="url(#gLB)" stroke="#1c78e8" stroke-width="1"/>
<polygon points="674.61,153.21 674.95,156.54 678.17,155.61 676.05,158.20 678.99,159.81 675.66,160.15 676.59,163.37 674.00,161.25 672.39,164.19 672.05,160.86 668.83,161.79 670.95,159.20 668.01,157.59 671.34,157.25 670.41,154.03 673.00,156.15" fill="url(#gSp)" stroke="#f09010" stroke-width=".5"/>
<rect x="690" y="146" width="1" height="27" fill="#a0a0a0"/><rect x="691" y="146" width="1" height="27" fill="#fff"/>
<path d="M701 159 H705 M703.500 156.300 L706.200 159 L703.500 161.700" stroke="#283080" stroke-width="1.600" fill="none"/>
<rect x="708.5" y="155.5" width="7" height="7" fill="url(#gB2)" stroke="#5c68a8" stroke-width="1"/>
<path d="M737 151 V155 M734.300 153.500 L737 156.200 L739.700 153.500" stroke="#283080" stroke-width="1.600" fill="none"/>
<rect x="733.5" y="158.5" width="7" height="6" fill="url(#gB2)" stroke="#5c68a8" stroke-width="1"/>
<path d="M757.800 152.800 L762 157" stroke="#283080" stroke-width="1.900" fill="none"/><path d="M764 153.800 V159 H758.800 Z" fill="#283080"/>
<rect x="764.5" y="159.5" width="7" height="6" fill="url(#gB2)" stroke="#5c68a8" stroke-width="1"/>
<rect x="784" y="146" width="1" height="27" fill="#a0a0a0"/><rect x="785" y="146" width="1" height="27" fill="#fff"/>
<path d="M795.300 152.300 L800 157" stroke="#000080" stroke-width="2.200" fill="none"/><path d="M802 152.800 V159 H795.800 Z" fill="#000080"/>
<path d="M806 153.600 H811 M808.500 151.100 V156.100" stroke="#000" stroke-width="1.100"/>
<rect x="802.5" y="159.5" width="6" height="5" fill="url(#gLB)" stroke="#1c70e0" stroke-width="1"/>
<rect x="804.5" y="161.5" width="6" height="5" fill="url(#gLB)" stroke="#1c70e0" stroke-width="1"/>
<rect x="826.500" y="156.500" width="9.500" height="8" fill="#fff" stroke="#1c70e0" stroke-width="1.200"/><path d="M827.500 157.500 H833 V160.500 H830.500 V161.500 H827.500 Z" fill="#78b8f8"/><path d="M830.500 157 V161 M827 161 H833.500 V157" stroke="#1c70e0" stroke-width=".8" fill="none"/>
<path d="M834 153.600 H839 M836.500 151.100 V156.100" stroke="#000" stroke-width="1.100"/>
<rect x="852.500" y="157.500" width="14" height="6" fill="url(#gLB)" stroke="#1c70e0" stroke-width="1.200"/><path d="M855 160.500 H863 M860.500 158.300 L863.500 160.500 L860.500 162.700 Z" stroke="#000" stroke-width="1.200" fill="#000"/>
<rect x="879" y="146" width="1" height="27" fill="#a0a0a0"/><rect x="880" y="146" width="1" height="27" fill="#fff"/>
<polygon points="900.90,158.00 899.32,159.42 899.44,161.54 897.32,161.42 895.90,163.00 894.48,161.42 892.36,161.54 892.48,159.42 890.90,158.00 892.48,156.58 892.36,154.46 894.48,154.58 895.90,153.00 897.32,154.58 899.44,154.46 899.32,156.58" fill="#dcdcdc" stroke="#909090" stroke-width=".9"/><circle cx="895.9" cy="158" r="1.800" fill="#f4f4f4" stroke="#909090" stroke-width=".8"/>
<use href="#stamp" x="899.1" y="156.8" width="7" height="10.200"/>
<polygon points="929.00,158.00 927.42,159.42 927.54,161.54 925.42,161.42 924.00,163.00 922.58,161.42 920.46,161.54 920.58,159.42 919.00,158.00 920.58,156.58 920.46,154.46 922.58,154.58 924.00,153.00 925.42,154.58 927.54,154.46 927.42,156.58" fill="#dcdcdc" stroke="#a0a0a0" stroke-width=".9"/><circle cx="924" cy="158" r="1.800" fill="#f4f4f4" stroke="#a0a0a0" stroke-width=".8"/>
<path d="M920 154 L928 162 M928 154 L920 162" stroke="#b41828" stroke-width="2.600"/>
<use href="#stamp" x="927.1" y="156.8" width="7" height="10.200"/>
<path d="M952.500 152.500 L957.500 152.500 L954.800 156 L958 156 L950.500 163 L952.800 158 L949 158 Z" fill="#ffd820" stroke="#e8a810" stroke-width=".7"/>
<use href="#stamp" x="955.1" y="156.8" width="7" height="10.200"/>
<path d="M977.500 154 H985.500 V160.500 H977.500 Z" fill="#e8f2ff" stroke="#98c0f0" stroke-width="1"/><path d="M976 162.500 H987 L985.500 160.500 H977.500 Z" fill="#c4dcf8" stroke="#98c0f0" stroke-width=".7"/>
<use href="#stamp" x="983.1" y="156.8" width="7" height="10.200"/>
<rect x="1001" y="146" width="1" height="27" fill="#a0a0a0"/><rect x="1002" y="146" width="1" height="27" fill="#fff"/>
<rect x="1012.500" y="154.500" width="9" height="4" fill="#a8acd8" stroke="#2c2c6c" stroke-width="1"/><rect x="1016.200" y="152" width="1.600" height="2.300" fill="#e00010"/>
<use href="#stamp" x="1021.1" y="156.8" width="7" height="10.200"/>
<rect x="1040.500" y="154.500" width="9" height="4" fill="#a8acd8" stroke="#2c2c6c" stroke-width="1"/><rect x="1044.200" y="159" width="1.600" height="2.300" fill="#e00010"/>
<use href="#stamp" x="1049.1" y="156.8" width="7" height="10.200"/>
<rect x="1072.5" y="153.500" width="6" height="3" fill="#80b0b8" stroke="#306068" stroke-width="1"/><rect x="1072.5" y="161.500" width="6" height="3" fill="#80b0b8" stroke="#306068" stroke-width="1"/><rect x="1074.9" y="157" width="1.200" height="4.500" fill="#f00010"/>
<rect x="1100.5" y="153.500" width="6" height="3" fill="#80b0b8" stroke="#306068" stroke-width="1"/><rect x="1100.5" y="161.500" width="6" height="3" fill="#80b0b8" stroke="#306068" stroke-width="1"/><rect x="1102.9" y="157" width="1.200" height="4.500" fill="#f00010"/>
<path d="M1109 155 C1112 156.500 1112 161.500 1109 163" stroke="#000" stroke-width="1" fill="none"/><path d="M1107.500 155 L1110.500 153.300 L1110.500 156.800 Z M1107.500 163 L1110.500 161.200 L1110.500 164.800 Z" fill="#000"/>
<rect x="1123" y="146" width="1" height="27" fill="#a0a0a0"/><rect x="1124" y="146" width="1" height="27" fill="#fff"/>
<rect x="1135.5" y="156.5" width="3" height="6" fill="url(#gPin)" stroke="#2c2c6c" stroke-width="1" opacity="1"/>
<rect x="1145.5" y="156.5" width="3" height="6" fill="url(#gPin)" stroke="#2c2c6c" stroke-width="1" opacity="1"/>
<path d="M1139 159.500 H1145" stroke="#c00018" stroke-width=".8"/><path d="M1140.300 157.800 L1143.700 161.200 M1143.700 157.800 L1140.300 161.200" stroke="#c00018" stroke-width="1"/>
<rect x="1162.5" y="153.5" width="3" height="6" fill="url(#gPin)" stroke="#2c2c6c" stroke-width="1" opacity="1"/>
<rect x="1174.5" y="157.5" width="3" height="6" fill="url(#gPin)" stroke="#2c2c6c" stroke-width="1" opacity="1"/>
<path d="M1166 156.500 H1169.500 V160.500 H1174" stroke="#000" stroke-width="1" fill="none"/><text x="1169.800" y="158" font-size="7.500" font-weight="bold" fill="#c00018" font-family="Liberation Sans, sans-serif">?</text>
<rect x="1189" y="146" width="1" height="27" fill="#a0a0a0"/><rect x="1190" y="146" width="1" height="27" fill="#fff"/>
<rect x="1200.5" y="152.5" width="3" height="6" fill="url(#gPin)" stroke="#2c2c6c" stroke-width="1" opacity="1"/>
<rect x="1212.5" y="159.5" width="3" height="6" fill="url(#gPin)" stroke="#2c2c6c" stroke-width="1" opacity="1"/>
<path d="M1204 155 L1212 163" stroke="#000" stroke-width="1.100"/>
<rect x="1228.5" y="153.5" width="3" height="6" fill="url(#gPin)" stroke="#2c2c6c" stroke-width="1" opacity="1"/>
<rect x="1240.5" y="157.5" width="3" height="6" fill="url(#gPin)" stroke="#2c2c6c" stroke-width="1" opacity="1"/>
<path d="M1232 156.500 H1234 L1238 160.500 H1240" stroke="#000" stroke-width="1.100" fill="none"/>
<rect x="1256.5" y="153.5" width="3" height="6" fill="url(#gPin)" stroke="#2c2c6c" stroke-width="1" opacity="1"/>
<rect x="1268.5" y="157.5" width="3" height="6" fill="url(#gPin)" stroke="#2c2c6c" stroke-width="1" opacity="1"/>
<path d="M1260 156.500 H1262 Q1263.500 156.500 1263.500 158 V159 Q1263.500 160.500 1265 160.500 H1268" stroke="#000" stroke-width="1.100" fill="none"/>
<rect x="1284.5" y="153.5" width="3" height="6" fill="url(#gPin)" stroke="#a8a8cc" stroke-width="1" opacity="0.45"/>
<rect x="1296.5" y="157.5" width="3" height="6" fill="url(#gPin)" stroke="#a8a8cc" stroke-width="1" opacity="0.45"/>
<path d="M1288 156.500 H1291.500 V160.500 H1296" stroke="#b0b0b8" stroke-width="1.100" fill="none"/>
</svg>
<svg class="a" style="left:1509px;top:151px" width="16" height="16"><use href="#help" width="16" height="16"/></svg>
<!--TBEND-->
<!--TB2-->

<div class="a" style="left:473px;top:175px;width:1058px;height:745px;background:#f0f0f0;border-top:1px solid #828282;border-left:1px solid #828282;border-bottom:2px solid #fff;box-sizing:content-box"></div>
<div class="a" style="left:1532px;top:111px;width:1px;height:813px;background:#7a7a7a"></div><div class="a" style="left:1530px;top:111px;width:3px;height:1px;background:#7a7a7a"></div><div class="a" style="left:471px;top:923px;width:1062px;height:1px;background:#828282"></div>
<div class="a" style="left:474px;top:176px;width:1040px;height:728px;background:#fff"></div>
<div class="a" style="left:1515px;top:293px;width:14px;height:592px;background:#cdcdcd"></div>
<div class="a" style="left:618px;top:906px;width:876px;height:14px;background:#cdcdcd"></div>
<svg class="a" style="left:474px;top:176px" width="1057" height="746" viewBox="474 176 1057 746">
<path d="M1519.200 187 L1522.500 183.700 L1525.800 187 Z" fill="#404040"/><path d="M1519.200 893 L1522.500 896.500 L1525.800 893 Z" fill="#404040"/>
<path d="M1502.700 910 L1506.200 913.500 L1502.700 917 Z" fill="#404040"/><path d="M484.300 910 L480.800 913.500 L484.300 917 Z" fill="#404040"/>
<defs><clipPath id="cv"><rect x="474" y="176" width="1040" height="728"/></clipPath></defs><g clip-path="url(#cv)" font-family="Liberation Sans, sans-serif" font-size="11">
<rect x="764.500" y="170.500" width="95" height="19" fill="#e9edf1" stroke="#000"/>
<path d="M788.500 190 V199" stroke="#000" stroke-width="1"/><path d="M786 196.500 H791 L788.500 200 Z" fill="#000"/>
<path d="M788.500 201 V284" stroke="#000" stroke-width="1" stroke-dasharray="1 1"/>
<rect x="786.500" y="284.5" width="4" height="9" fill="#fff" stroke="#f00" stroke-width="1"/>
<path d="M788.500 284 V292" stroke="#000" stroke-width="1"/><path d="M786.500 291 H790.500 L788.500 294 Z" fill="#000"/>
<rect x="765.5" y="295.5" width="61" height="93" fill="#e9edf1" stroke="#f00" stroke-width="3"/>
<rect x="767" y="297" width="58" height="24" fill="#658093"/>
<rect x="767" y="321" width="58" height="1" fill="#000"/>
<text x="796.0" y="313.0" fill="#fff" stroke="#fff" stroke-width=".2" text-anchor="middle" textLength="49.5" lengthAdjust="spacingAndGlyphs">Send Keys</text>
<rect x="754.5" y="332.5" width="10" height="4" fill="#fff" stroke="#f00" stroke-width="1"/>
<rect x="755" y="333.0" width="4" height="3" fill="#a8a8a8"/><rect x="759" y="334.0" width="6" height="1" fill="#b8b8b8"/>
<rect x="754.5" y="348.5" width="10" height="4" fill="#fff" stroke="#f00" stroke-width="1"/>
<rect x="755" y="349.0" width="4" height="3" fill="#a8a8a8"/><rect x="759" y="350.0" width="6" height="1" fill="#b8b8b8"/>
<rect x="754.5" y="364.5" width="10" height="4" fill="#fff" stroke="#f00" stroke-width="1"/>
<rect x="755" y="365.0" width="4" height="3" fill="#000"/><rect x="759" y="366.0" width="6" height="1" fill="#000"/>
<text x="768" y="339.0" fill="#000" stroke="#000" stroke-width=".25" text-anchor="start" textLength="35" lengthAdjust="spacingAndGlyphs">locator</text>
<text x="768" y="355.0" fill="#000" stroke="#000" stroke-width=".25" text-anchor="start" textLength="20.5" lengthAdjust="spacingAndGlyphs">keys</text>
<text x="768" y="371.0" fill="#000" stroke="#000" stroke-width=".25" text-anchor="start" textLength="38.8" lengthAdjust="spacingAndGlyphs">timeout</text>
<rect x="460.5" y="327.5" width="293" height="14" fill="#fff" stroke="#000" stroke-width="1"/>
<text x="751.5" y="339" fill="#f0f" text-anchor="end" textLength="284" lengthAdjust="spacingAndGlyphs">ontentDiv"]/div...hSmallX"]/table/tbody/tr/td[1]/div/input</text>
<rect x="672" y="344" width="81" height="13" fill="#fff" stroke="#f00" stroke-width="2"/>
<text x="748.5" y="355" fill="#f0f" text-anchor="end" textLength="71.5" lengthAdjust="spacingAndGlyphs">mmustermann</text>
<rect x="786.500" y="390.5" width="4" height="9" fill="#fff" stroke="#f00" stroke-width="1"/>
<path d="M788.500 390 V397" stroke="#000" stroke-width="1"/><rect x="787" y="396.5" width="3" height="2.500" fill="#000"/>
<rect x="787" y="400" width="2" height="24" fill="#f00"/>
<rect x="786.500" y="424.5" width="4" height="9" fill="#fff" stroke="#f00" stroke-width="1"/>
<path d="M788.500 424 V432" stroke="#000" stroke-width="1"/><path d="M786.500 431 H790.500 L788.500 434 Z" fill="#000"/>
<rect x="765.5" y="434.5" width="61" height="93" fill="#e9edf1" stroke="#f00" stroke-width="3"/>
<rect x="767" y="436" width="58" height="24" fill="#658093"/>
<rect x="767" y="460" width="58" height="1" fill="#000"/>
<text x="796.0" y="452.0" fill="#fff" stroke="#fff" stroke-width=".2" text-anchor="middle" textLength="49.5" lengthAdjust="spacingAndGlyphs">Send Keys</text>
<rect x="754.5" y="468.5" width="10" height="4" fill="#fff" stroke="#f00" stroke-width="1"/>
<rect x="755" y="469.0" width="4" height="3" fill="#a8a8a8"/><rect x="759" y="470.0" width="6" height="1" fill="#b8b8b8"/>
<rect x="754.5" y="484.5" width="10" height="4" fill="#fff" stroke="#f00" stroke-width="1"/>
<rect x="755" y="485.0" width="4" height="3" fill="#a8a8a8"/><rect x="759" y="486.0" width="6" height="1" fill="#b8b8b8"/>
<rect x="754.5" y="500.5" width="10" height="4" fill="#fff" stroke="#f00" stroke-width="1"/>
<rect x="755" y="501.0" width="4" height="3" fill="#000"/><rect x="759" y="502.0" width="6" height="1" fill="#000"/>
<text x="768" y="475.0" fill="#000" stroke="#000" stroke-width=".25" text-anchor="start" textLength="35" lengthAdjust="spacingAndGlyphs">locator</text>
<text x="768" y="491.0" fill="#000" stroke="#000" stroke-width=".25" text-anchor="start" textLength="20.5" lengthAdjust="spacingAndGlyphs">keys</text>
<text x="768" y="507.0" fill="#000" stroke="#000" stroke-width=".25" text-anchor="start" textLength="38.8" lengthAdjust="spacingAndGlyphs">timeout</text>
<rect x="460.5" y="463.5" width="293" height="14" fill="#fff" stroke="#000" stroke-width="1"/>
<text x="751.5" y="475" fill="#f0f" text-anchor="end" textLength="284" lengthAdjust="spacingAndGlyphs">ontentDiv"]/div...hSmallX"]/table/tbody/tr/td[1]/div/input</text>
<rect x="727" y="480" width="26" height="13" fill="#fff" stroke="#f00" stroke-width="2"/>
<text x="748.7" y="491" fill="#f0f" text-anchor="end" textLength="17" lengthAdjust="spacingAndGlyphs">mm</text>
<rect x="786.500" y="529.5" width="4" height="9" fill="#fff" stroke="#f00" stroke-width="1"/>
<path d="M788.500 529 V536" stroke="#000" stroke-width="1"/><rect x="787" y="535.5" width="3" height="2.500" fill="#000"/>
<rect x="787" y="539" width="2" height="24" fill="#f00"/>
<rect x="786.500" y="563.0" width="4" height="9" fill="#fff" stroke="#f00" stroke-width="1"/>
<path d="M788.500 562.5 V570.5" stroke="#000" stroke-width="1"/><path d="M786.500 569.5 H790.500 L788.500 572.5 Z" fill="#000"/>
<rect x="765.5" y="573.5" width="61" height="77" fill="#e9edf1" stroke="#f00" stroke-width="3"/>
<rect x="767" y="575" width="58" height="24" fill="#658093"/>
<rect x="767" y="599" width="58" height="1" fill="#000"/>
<text x="796.0" y="591.0" fill="#fff" stroke="#fff" stroke-width=".2" text-anchor="middle" textLength="23.5" lengthAdjust="spacingAndGlyphs">Click</text>
<rect x="754.5" y="612.5" width="10" height="4" fill="#fff" stroke="#f00" stroke-width="1"/>
<rect x="755" y="613.0" width="4" height="3" fill="#a8a8a8"/><rect x="759" y="614.0" width="6" height="1" fill="#b8b8b8"/>
<rect x="754.5" y="628.5" width="10" height="4" fill="#fff" stroke="#f00" stroke-width="1"/>
<rect x="755" y="629.0" width="4" height="3" fill="#000"/><rect x="759" y="630.0" width="6" height="1" fill="#000"/>
<text x="768" y="619.0" fill="#000" stroke="#000" stroke-width=".25" text-anchor="start" textLength="35" lengthAdjust="spacingAndGlyphs">locator</text>
<text x="768" y="635.0" fill="#000" stroke="#000" stroke-width=".25" text-anchor="start" textLength="38.8" lengthAdjust="spacingAndGlyphs">timeout</text>
<rect x="460.5" y="607.5" width="293" height="14" fill="#fff" stroke="#000" stroke-width="1"/>
<text x="751.5" y="619" fill="#f0f" text-anchor="end" textLength="284" lengthAdjust="spacingAndGlyphs">ontentDiv"]/div...able/tbody/tr[5]/td[@class="left"]/input</text>
<rect x="786.500" y="652.5" width="4" height="9" fill="#fff" stroke="#f00" stroke-width="1"/>
<path d="M788.500 652 V659" stroke="#000" stroke-width="1"/><rect x="787" y="658.5" width="3" height="2.500" fill="#000"/>
<path d="M788.500 662 V684" stroke="#000" stroke-width="1" stroke-dasharray="1 1"/><path d="M788.500 684 V694" stroke="#000"/><path d="M786 690.500 H791 L788.500 694 Z" fill="#000"/>
<rect x="764.5" y="694.5" width="71" height="79" fill="#e9edf1" stroke="#000" stroke-width="1"/>
<rect x="765" y="695" width="70" height="26" fill="#658093"/>
<rect x="765" y="721" width="70" height="1" fill="#000"/>
<text x="800.0" y="712.5" fill="#fff" stroke="#fff" stroke-width=".2" text-anchor="middle" textLength="40" lengthAdjust="spacingAndGlyphs">Get Text</text>
<rect x="754" y="732.0" width="5" height="5" fill="#b0b0b0"/><rect x="759" y="734.0" width="5" height="1" fill="#b0b0b0"/>
<rect x="754" y="748.0" width="5" height="5" fill="#000"/><rect x="759" y="750.0" width="5" height="1" fill="#000"/>
<text x="767.5" y="739.0" fill="#000" stroke="#000" stroke-width=".25" text-anchor="start" textLength="35" lengthAdjust="spacingAndGlyphs">locator</text>
<text x="767.5" y="755.0" fill="#000" stroke="#000" stroke-width=".25" text-anchor="start" textLength="38.8" lengthAdjust="spacingAndGlyphs">timeout</text>
<text x="814" y="739.0" fill="#000" stroke="#000" stroke-width=".25" text-anchor="start" textLength="18.8" lengthAdjust="spacingAndGlyphs">text</text>
<rect x="460.5" y="727.5" width="293" height="14" fill="#fff" stroke="#000" stroke-width="1"/>
<text x="747.5" y="739" fill="#f0f" text-anchor="end" textLength="279.5" lengthAdjust="spacingAndGlyphs">ontentDiv"]/div...SelectBox center"]/table/tbody/tr[1]/th</text>
<rect x="836" y="734" width="5" height="1" fill="#000"/><rect x="841.500" y="732.500" width="4" height="4" fill="#fff" stroke="#000"/><rect x="846" y="734" width="268" height="1" fill="#000"/>
<rect x="1124.5" y="678.5" width="87" height="95" fill="#e9edf1" stroke="#000" stroke-width="1"/>
<rect x="1125" y="679" width="86" height="26" fill="#658093"/>
<rect x="1125" y="705" width="86" height="1" fill="#000"/>
<text x="1168.5" y="696.5" fill="#fff" stroke="#fff" stroke-width=".2" text-anchor="middle" textLength="74" lengthAdjust="spacingAndGlyphs">Assert [ Equal ]</text>
<rect x="1114" y="716.0" width="5" height="5" fill="#b0b0b0"/><rect x="1119" y="718.0" width="5" height="1" fill="#b0b0b0"/>
<rect x="1114.5" y="732.5" width="4" height="4" fill="#fff" stroke="#000" stroke-width="1"/><rect x="1119" y="734.0" width="5" height="1" fill="#000"/>
<rect x="1114" y="748.0" width="5" height="5" fill="#000"/><rect x="1119" y="750.0" width="5" height="1" fill="#000"/>
<text x="1127.7" y="723.0" fill="#000" stroke="#000" stroke-width=".25" text-anchor="start" textLength="45" lengthAdjust="spacingAndGlyphs">expected</text>
<text x="1127.7" y="739.0" fill="#000" stroke="#000" stroke-width=".25" text-anchor="start" textLength="30.3" lengthAdjust="spacingAndGlyphs">actual</text>
<text x="1127.7" y="755.0" fill="#000" stroke="#000" stroke-width=".25" text-anchor="start" textLength="43" lengthAdjust="spacingAndGlyphs">message</text>
<rect x="1035.5" y="711.5" width="78" height="14" fill="#fff" stroke="#000" stroke-width="1"/>
<text x="1108.5" y="723" fill="#f0f" text-anchor="end" textLength="68" lengthAdjust="spacingAndGlyphs">'Projektfilter:'</text>
</g></svg>
<div class="a" style="left:873px;top:926px;width:125px;height:22px;border:1px solid #000;color:#838383;text-align:center;line-height:20px"><span style="display:inline-block;transform:scaleX(0.9859);transform-origin:50% 50%">Übernehmen</span></div>
<div class="a" style="left:1003px;top:926px;width:125px;height:22px;border:1px solid #000;color:#838383;text-align:center;line-height:20px"><span style="display:inline-block;transform:scaleX(0.9754);transform-origin:50% 50%">Verwerfen</span></div>
<div class="a" style="left:8px;top:955px;width:737px;height:24px;border-top:1px solid #a0a0a0;border-left:1px solid #a0a0a0;border-right:1px solid #fff"></div>
<div class="a" style="left:753px;top:955px;width:713px;height:24px;border-top:1px solid #a0a0a0;border-left:1px solid #a0a0a0;border-right:1px solid #fff"></div>
<div class="a" style="left:1466px;top:955px;width:25px;height:24px;border-top:1px solid #a0a0a0;border-left:1px solid #a0a0a0;border-right:1px solid #fff"></div>
<div class="a" style="left:1491px;top:955px;width:25px;height:24px;border-top:1px solid #a0a0a0;border-left:1px solid #a0a0a0;border-right:1px solid #fff"></div>
<div class="a" style="left:8px;top:979px;width:1525px;height:1px;background:#fff"></div>
<div class="t" style="left:758px;top:961px"><span style="display:inline-block;transform:scaleX(0.9981);transform-origin:0 50%">Login <b>[geändert]</b></span></div>
<svg class="a" style="left:1470px;top:959px" width="16" height="16" viewBox="0 0 16 16"><defs><linearGradient id="gSph" x1="0" y1="0" x2="0" y2="1"><stop offset="0" stop-color="#ffffff"/><stop offset=".46" stop-color="#e2e2e2"/><stop offset=".54" stop-color="#b6b6b6"/><stop offset="1" stop-color="#e8e8e8"/></linearGradient></defs><circle cx="8" cy="8" r="6.800" fill="url(#gSph)" stroke="#9c9c9c" stroke-width=".8"/></svg>

</body></html>
